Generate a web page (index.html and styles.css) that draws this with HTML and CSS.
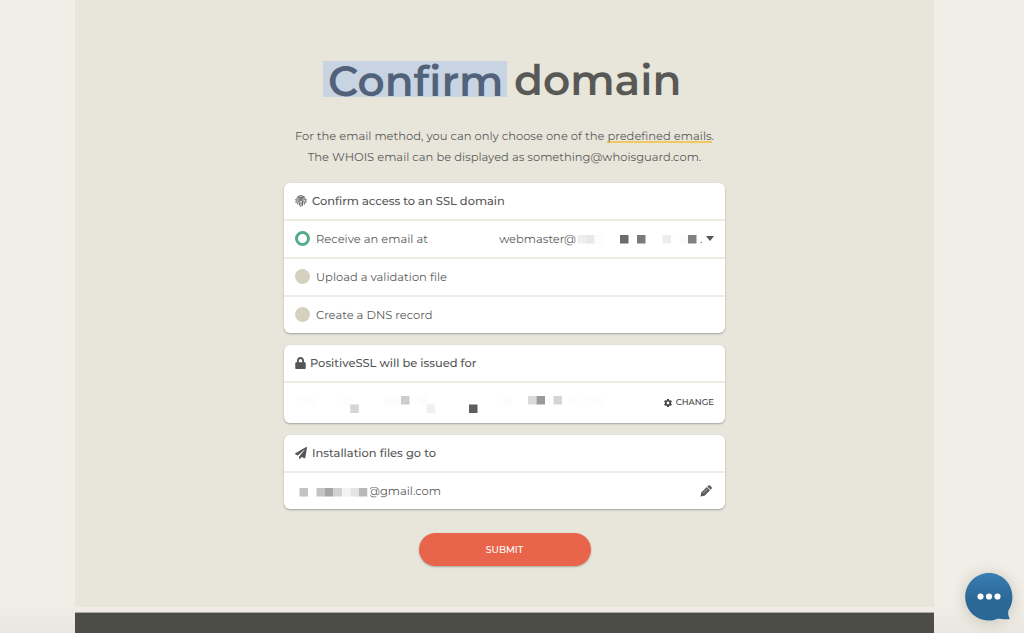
FILE: index.html
```html
<!DOCTYPE html>
<html lang="en">
<head>
    <meta charset="UTF-8">
    <meta name="viewport" content="width=device-width, initial-scale=1.0">
    <title>Confirm domain</title>
    <link rel="stylesheet" href="styles.css">
</head>
<body>

    <main class="page">
        <h1><span class="selected">Confirm</span><span class="rest">domain</span></h1>
        <p class="intro">
            For the email method, you can only choose one of the <a href="#">predefined emails</a>.<br>
            The WHOIS email can be displayed as something@whoisguard.com.
        </p>

        <form class="cards">
            <section class="card">
                <h2>
                    <svg class="icon finger" viewBox="0 0 24 24" fill="none" stroke="currentColor" stroke-width="2" stroke-linecap="round">
                        <path d="M5 4C9 .5 15 .5 19 4M1 10C4 2.500 20 2.500 23 10M2 15C1 5 23 4 22 15M5.500 18C3 6 20 6 18.800 18M9 20C10 15 7 13.500 9 11.500C11 9.500 15.500 11 15.500 14C15.500 17 15 19 14.500 21M12 14C12.500 18 12 20 11.500 23"/>
                    </svg>
                    <span>Confirm access to an SSL domain</span>
                </h2>
                <div class="row">
                    <span class="radio checked"></span>
                    <span>Receive an email at</span>
                    <span class="email">
                        <span>webmaster@</span>
                        <svg class="mask" width="120" height="9" viewBox="0 0 120 9">
                            <rect x=".5" width="8.500" height="8.500" fill="#eee"/>
                            <rect x="9" width="8.500" height="8.500" fill="#e8e8e8"/>
                            <rect x="17.500" width="8.500" height="8.500" fill="#fcfcfc"/>
                            <rect x="43" width="8.500" height="8.500" fill="#6c6c6c"/>
                            <rect x="60" width="8.500" height="8.500" fill="#7a7a7a"/>
                            <rect x="85.500" width="8.500" height="8.500" fill="#eee"/>
                            <rect x="102.500" width="8.500" height="8.500" fill="#fbfbfb"/>
                            <rect x="111" width="8.500" height="8.500" fill="#808080"/>
                        </svg>
                        <span class="dot">.</span>
                        <span class="caret"></span>
                    </span>
                </div>
                <div class="row">
                    <span class="radio"></span>
                    <span>Upload a validation file</span>
                </div>
                <div class="row">
                    <span class="radio"></span>
                    <span>Create a DNS record</span>
                </div>
            </section>

            <section class="card">
                <h2>
                    <svg class="icon lock" viewBox="0 0 448 512" fill="currentColor">
                        <path d="M400 224h-24v-72C376 68 308 0 224 0S72 68 72 152v72H48c-26 0-48 22-48 48v192c0 26 22 48 48 48h352c26 0 48-22 48-48V272c0-26-22-48-48-48zm-104 0H152v-72c0-40 32-72 72-72s72 32 72 72v72z"/>
                    </svg>
                    <span>PositiveSSL will be issued for</span>
                </h2>
                <div class="row tall">
                    <svg class="domain" width="310" height="17" viewBox="0 0 310 17">
                        <rect x="4" width="17" height="8.500" fill="#fdfdfd"/>
                        <rect x="46.500" width="8.500" height="8.500" fill="#fdfdfd"/>
                        <rect x="55.300" y="8.500" width="8.500" height="8.500" fill="#d5d5d5"/>
                        <rect x="89" width="17" height="8.500" fill="#fcfcfc"/>
                        <rect x="106" width="8.500" height="8.500" fill="#ccc"/>
                        <rect x="123" width="8.500" height="8.500" fill="#fcfcfc"/>
                        <rect x="131.700" y="8.500" width="8.500" height="8.500" fill="#f0f0f0"/>
                        <rect x="174" y="8.500" width="8.500" height="8.500" fill="#5e5e5e"/>
                        <rect x="208" width="8.500" height="8.500" fill="#fcfcfc"/>
                        <rect x="233" width="8.500" height="8.500" fill="#dadada"/>
                        <rect x="241.500" width="8.500" height="8.500" fill="#9a9a9a"/>
                        <rect x="258.500" width="8.500" height="8.500" fill="#d5d5d5"/>
                        <rect x="275" width="8.500" height="8.500" fill="#fdfdfd"/>
                        <rect x="292" width="17" height="8.500" fill="#fdfdfd"/>
                    </svg>
                    <span class="change">
                        <svg class="icon gear" viewBox="2 2 20 20" fill="currentColor">
                            <path d="M19.430 12.980c.04-.32.07-.64.07-.98s-.03-.66-.07-.98l2.110-1.650c.19-.15.24-.42.12-.64l-2-3.460c-.12-.22-.39-.3-.61-.22l-2.490 1c-.52-.4-1.080-.73-1.690-.98l-.38-2.650C14.460 2.180 14.250 2 14 2h-4c-.25 0-.46.18-.49.42l-.38 2.650c-.61.25-1.170.59-1.690.98l-2.490-1c-.23-.09-.49 0-.61.22l-2 3.460c-.13.22-.07.49.12.64l2.110 1.650c-.04.32-.07.65-.07.98s.03.66.07.98l-2.110 1.650c-.19.15-.24.42-.12.64l2 3.460c.12.22.39.3.61.22l2.490-1c.52.4 1.080.73 1.690.98l.38 2.650c.03.24.24.42.49.42h4c.25 0 .46-.18.49-.42l.38-2.650c.61-.25 1.170-.59 1.690-.98l2.490 1c.23.09.49 0 .61-.22l2-3.460c.12-.22.07-.49-.12-.64zM12 15.500c-1.930 0-3.500-1.570-3.500-3.500s1.570-3.500 3.500-3.500 3.500 1.570 3.500 3.500-1.570 3.500-3.500 3.500z"/>
                        </svg>
                        <span>CHANGE</span>
                    </span>
                </div>
            </section>

            <section class="card">
                <h2>
                    <svg class="icon plane" viewBox="0 0 512 512" fill="currentColor">
                        <path d="M476 3.200L12.500 270.600c-18.100 10.400-15.800 35.600 2.200 43.200L121 358.400l287.300-253.200c5.500-4.900 13.300 2.600 8.600 8.300L176 407v80.500c0 23.600 28.500 32.900 42.500 15.800L282 426l124.600 52.200c14.200 6 30.400-2.900 33-18.200l72-432C515 7.800 493.300-6.800 476 3.200z"/>
                    </svg>
                    <span>Installation files go to</span>
                </h2>
                <div class="row">
                    <svg class="user" width="77" height="9" viewBox="0 0 77 9">
                        <rect x="4.500" width="8.500" height="8.500" fill="#c4c4c4"/>
                        <rect x="21.500" width="8.500" height="8.500" fill="#c4c4c4"/>
                        <rect x="30" width="8.500" height="8.500" fill="#a6a6a6"/>
                        <rect x="38.500" width="8.500" height="8.500" fill="#d2d2d2"/>
                        <rect x="47" width="8.500" height="8.500" fill="#f3f3f3"/>
                        <rect x="55.500" width="8.500" height="8.500" fill="#e4e4e4"/>
                        <rect x="64" width="8.500" height="8.500" fill="#b8b8b8"/>
                        <rect x="72.500" width="2.500" height="8.500" fill="#fff"/>
                    </svg>
                    <span class="gmail">@gmail.com</span>
                    <svg class="icon pencil" viewBox="0 0 24 24" fill="currentColor">
                        <path d="M1 23l1.500-8L13.500 4l6.500 6.500L9 21.500zM14.700 2.800L16.700.8q1.700-1.200 3.300.3l2.900 2.900q1.500 1.600.3 3.300l-2 2z"/>
                        <path d="M6.500 16l8-8" stroke="#fff" stroke-width="1"/>
                    </svg>
                </div>
            </section>

            <button class="submit" type="button">SUBMIT</button>
        </form>
    </main>

    <footer></footer>

    <div class="chat">
        <svg width="48" height="48" viewBox="0 0 48 48">
            <defs>
                <linearGradient id="blue" x1="0" y1="0" x2="0" y2="1">
                    <stop offset="0" stop-color="#3a7db4"/>
                    <stop offset=".55" stop-color="#2c6896"/>
                    <stop offset="1" stop-color="#2c6896"/>
                </linearGradient>
            </defs>
            <path fill="url(#blue)" d="M24 0C37.300 0 47.500 10.700 47.500 24c0 5.500-1.800 10-4 13.500-.8 2.500-.4 5 1.300 8.500-4 .8-8.500-.3-12-.3C30 47 27 47.500 24 47.500 10.700 47.500.2 37.300.2 24S10.700 0 24 0z"/>
            <circle cx="15.500" cy="23.500" r="3.100" fill="#fff"/>
            <circle cx="24" cy="23.500" r="3.100" fill="#fff"/>
            <circle cx="32.500" cy="23.500" r="3.100" fill="#fff"/>
        </svg>
    </div>

</body>
</html>
```

FILE: styles.css
```css
* {
    box-sizing: border-box;
}

body {
    margin: 0;
    height: 633px;
    overflow: hidden;
    background: linear-gradient(#f0eee7 600px, #e9e7e0 633px);
    color: #5c5c5c;
    font-family: Montserrat, Inter, sans-serif;
    font-size: 11.5px;
    text-rendering: geometricPrecision;
}

.page {
    width: 859px;
    height: 607px;
    margin-left: 75px;
    padding-top: 55px;
    background: #e8e6da;
}

h1 {
    display: flex;
    margin: 0 0 0 248px;
    height: 50px;
    align-items: center;
    color: #585856;
    font-size: 42.2px;
    font-weight: 600;
    line-height: 50px;
    white-space: nowrap;
}

.selected {
    width: 184px;
    height: 36px;
    margin-top: -2px;
    padding-left: 5px;
    background: #c8d4e1;
    color: #52627a;
    line-height: 40px;
}

.rest {
    margin-left: 7px;
    line-height: 52px;
}

.intro {
    margin: 21px 0 0;
    text-align: center;
    line-height: 20.5px;
    white-space: nowrap;
}

.intro a {
    color: inherit;
    text-decoration: none;
    box-shadow: inset 0 -2px #f0c860;
}

.cards {
    display: flex;
    flex-direction: column;
    gap: 12px;
    width: 441px;
    margin: 16px 0 0 209px;
}

.card {
    background: #fff;
    border-radius: 6px;
    box-shadow: 0 1px 2px rgba(70, 75, 70, 0.45);
}

h2 {
    display: flex;
    align-items: center;
    height: 36px;
    margin: 0;
    padding: 0 11px;
    color: #555;
    font-size: 11.45px;
    font-weight: 500;
}

.row {
    display: flex;
    align-items: center;
    height: 38px;
    padding: 0 11px 1px;
    border-top: 2px solid #ecebe4;
    white-space: nowrap;
}

.tall {
    height: 42px;
}

.icon {
    flex: none;
    width: 12px;
    height: 12px;
    margin-right: 5px;
}

.lock {
    width: 11px;
    margin-right: 4px;
}

.radio {
    width: 15px;
    height: 15px;
    margin: -1px 6px 0 0;
    border-radius: 50%;
    background: #d6d1be;
}

.checked {
    border: 3px solid #55ac8a;
    background: #fff;
}

.email {
    display: flex;
    align-items: center;
    margin-left: auto;
}

.mask {
    margin: 1px 0 0 1px;
}

.dot {
    width: 4px;
    margin: 0 2px 0 3px;
}

.caret {
    border: 4px solid transparent;
    border-top: 5px solid #555;
    border-bottom: 0;
}

.domain {
    margin-top: 3px;
}

.change {
    display: flex;
    align-items: center;
    margin: 1px 0 0 auto;
    color: #444;
    font-size: 8.5px;
    font-weight: 500;
}

.gear {
    width: 8px;
    height: 8px;
    margin-right: 4px;
}

.user {
    position: relative;
    margin-top: 4px;
}

/* the masked name covers the left edge of the @ */
.gmail {
    margin-left: -4px;
}

.pencil {
    margin: 0 2px 0 auto;
}

.submit {
    width: 172px;
    height: 33px;
    margin: 11.5px 0 0 134.5px;
    padding: 0;
    border: 0;
    border-radius: 17px;
    background: #e8654c;
    box-shadow: 0 1px 2px rgba(70, 75, 70, 0.4);
    color: #fff;
    font: 500 9.3px Montserrat, Inter, sans-serif;
}

footer {
    width: 859px;
    height: 21px;
    margin: 5px 0 0 75px;
    border-top: 1px solid #aaa9a2;
    background: #4c4d46;
}

.chat {
    position: absolute;
    left: 965px;
    top: 573px;
    width: 48px;
    height: 48px;
    border-radius: 50%;
    box-shadow: 0 1px 14px rgba(90, 80, 60, 0.25);
}
```
